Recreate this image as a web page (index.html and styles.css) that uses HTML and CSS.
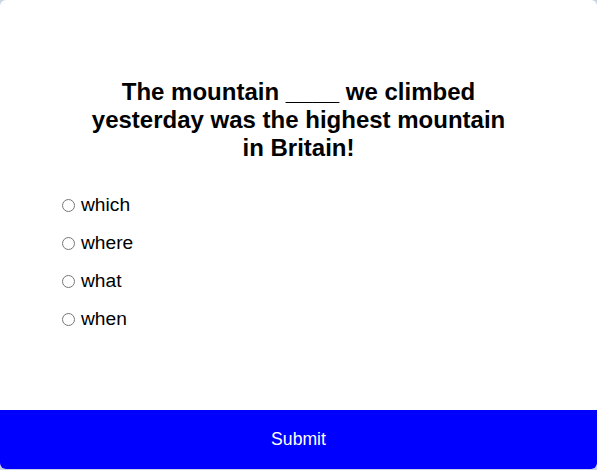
FILE: index.html
```html
<!DOCTYPE html>
<html>
<head>
<meta charset="utf-8">
<link rel="stylesheet" href="styles.css">
</head>
<body>
<div class="quiz">
  <div class="quiz-header">
    <h2 class="question">The mountain ____ we climbed yesterday was the highest mountain in Britain!</h2>
    <ul class="answers">
      <li><input type="radio" name="answer" id="a"><label for="a">which</label></li>
      <li><input type="radio" name="answer" id="b"><label for="b">where</label></li>
      <li><input type="radio" name="answer" id="c"><label for="c">what</label></li>
      <li><input type="radio" name="answer" id="d"><label for="d">when</label></li>
    </ul>
  </div>
  <button class="submit">Submit</button>
</div>
</body>
</html>
```
FILE: styles.css
```css
html, body {
  margin: 0;
  padding: 0;
}
body {
  background: #cbd4e4;
  font-family: "Liberation Sans", Arial, sans-serif;
  height: 470px;
}
.quiz {
  background: #ffffff;
  border-radius: 6px;
  height: 469px;
  overflow: hidden;
  display: flex;
  flex-direction: column;
}
.quiz-header {
  flex: 1;
  padding: 64px 57px 0;
}
.question {
  margin: 0 auto;
  padding: 14px 0 0;
  width: 430px;
  text-align: center;
  font-size: 24px;
  font-weight: bold;
  color: #000;
}
.answers {
  list-style: none;
  margin: 32px 0 0;
  padding: 0;
}
.answers li {
  font-size: 19.2px;
  line-height: 22px;
  margin: 0 0 16px;
  display: flex;
  align-items: center;
  color: #000;
}
.answers input {
  margin: 1px 6px 0 5px;
  width: 13px;
  height: 13px;
}
.submit {
  height: 59px;
  border: none;
  background: #0000ff;
  color: #ffffff;
  font-family: "Liberation Sans", Arial, sans-serif;
  font-size: 17.6px;
  display: block;
  width: 100%;
  padding: 0;
}
```
